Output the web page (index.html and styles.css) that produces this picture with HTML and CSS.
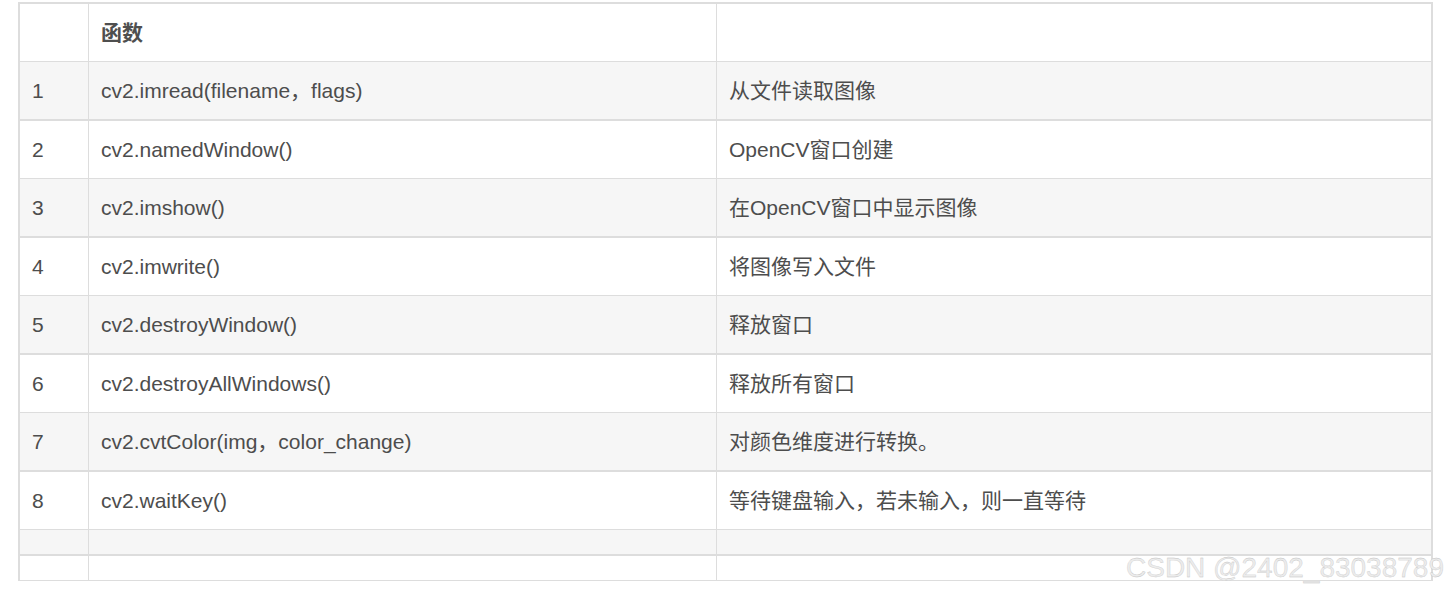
FILE: index.html
```html
<!DOCTYPE html>
<html lang="zh-CN">
<head>
<meta charset="utf-8">
<title>OpenCV 函数</title>
<link rel="stylesheet" href="styles.css">
</head>
<body>
<div class="page">
  <table class="func-table">
    <colgroup>
      <col class="c-num">
      <col class="c-func">
      <col class="c-desc">
    </colgroup>
    <thead>
      <tr class="row-white">
        <th></th>
        <th>函数</th>
        <th></th>
      </tr>
    </thead>
    <tbody>
      <tr class="row-grey"><td>1</td><td>cv2.imread(filename，flags)</td><td>从文件读取图像</td></tr>
      <tr class="row-white"><td>2</td><td>cv2.namedWindow()</td><td>OpenCV窗口创建</td></tr>
      <tr class="row-grey"><td>3</td><td>cv2.imshow()</td><td>在OpenCV窗口中显示图像</td></tr>
      <tr class="row-white"><td>4</td><td>cv2.imwrite()</td><td>将图像写入文件</td></tr>
      <tr class="row-grey"><td>5</td><td>cv2.destroyWindow()</td><td>释放窗口</td></tr>
      <tr class="row-white"><td>6</td><td>cv2.destroyAllWindows()</td><td>释放所有窗口</td></tr>
      <tr class="row-grey"><td>7</td><td>cv2.cvtColor(img，color_change)</td><td>对颜色维度进行转换。</td></tr>
      <tr class="row-white"><td>8</td><td>cv2.waitKey()</td><td>等待键盘输入，若未输入，则一直等待</td></tr>
      <tr class="row-grey empty"><td></td><td></td><td></td></tr>
      <tr class="row-white empty"><td></td><td></td><td></td></tr>
    </tbody>
  </table>
  <div class="watermark">CSDN @2402_83038789</div>
</div>
</body>
</html>
```

FILE: styles.css
```css
html, body {
  margin: 0;
  padding: 0;
  background: #ffffff;
}

.page {
  position: relative;
  width: 1446px;
  height: 594px;
  padding: 2px 0 0 18px;
  box-sizing: border-box;
  font-family: "Liberation Sans", "Noto Sans CJK SC", sans-serif;
  color: #4d4d4d;
}

.func-table {
  border-collapse: separate;
  border-spacing: 0;
  width: 1415px;
  table-layout: fixed;
  border-top: 2px solid #dddddd;
  border-left: 2px solid #dddddd;
  border-right: 2px solid #dddddd;
  font-size: 21px;
}

.c-num { width: 69px; }
.c-func { width: 628px; }
.c-desc { width: 714px; }

.func-table th,
.func-table td {
  box-sizing: content-box;
  height: 33px;
  line-height: 33px;
  padding: 12px 12px;
  text-align: left;
  vertical-align: middle;
  border-right: 1px solid #dddddd;
  border-bottom: 1px solid #dddddd;
  white-space: nowrap;
}

.func-table th:last-child,
.func-table td:last-child {
  border-right: none;
}

.func-table th {
  font-weight: bold;
  color: #4f4f4f;
}

.row-white { background: #ffffff; }
.row-grey { background: #f6f6f6; }

.row-grey td {
  border-bottom-width: 2px;
}

.func-table .empty td {
  height: 0;
  line-height: 0;
  padding: 12px 12px;
}

.watermark {
  position: absolute;
  left: 1126px;
  top: 554px;
  font-family: "Liberation Sans", sans-serif;
  font-size: 28px;
  line-height: 28px;
  white-space: nowrap;
  color: #ececec;
  -webkit-text-stroke: 0.3px #c2c2c2;
}
```
